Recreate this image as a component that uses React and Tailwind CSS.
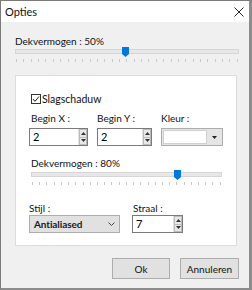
import React from "react";

function Ticks({ count, className }) {
  return (
    <div className={"flex justify-between " + className}>
      {Array.from({ length: count }).map((_, i) => (
        <div key={i} className="w-px h-[3px] bg-[#c8c8c8]" />
      ))}
    </div>
  );
}

function Thumb({ className }) {
  return (
    <svg className={"absolute " + className} width="7" height="10" viewBox="0 0 7 10">
      <polygon points="0,0 7,0 7,7 3.5,10 0,7" fill="#0078d7" />
    </svg>
  );
}

function Spin() {
  return (
    <div className="flex flex-col w-[9px] h-full border-l border-[#e0e0e0]">
      <div className="flex-1 bg-[#e8e8e8] border border-[#bcbcbc] flex items-center justify-center">
        <svg width="5" height="3" viewBox="0 0 5 3"><polygon points="0,3 5,3 2.5,0" fill="#333" /></svg>
      </div>
      <div className="flex-1 bg-[#e8e8e8] border border-t-0 border-[#bcbcbc] flex items-center justify-center">
        <svg width="5" height="3" viewBox="0 0 5 3"><polygon points="0,0 5,0 2.5,3" fill="#333" /></svg>
      </div>
    </div>
  );
}

function NumInput({ value, className }) {
  return (
    <div className={"h-[18px] bg-white border border-[#7a7a7a] flex items-stretch " + className}>
      <div className="flex-1 pl-[3px] leading-[16px] text-[11px] text-black">{value}</div>
      <Spin />
    </div>
  );
}

export default function App() {
  return (
    <div
      className="w-[252px] h-[290px] bg-[#f0f0f0] border-l border-t border-[#7a7a7a] border-r-[3px] border-r-[#8c8c8c] border-b-[2px] border-b-[#8c8c8c] flex flex-col text-[10px] text-[#111]"
      style={{ fontFamily: 'Lato, "Noto Sans", sans-serif' }}
    >
      <div className="h-[21px] bg-white flex items-center justify-between pl-[4px] pr-[5px]">
        <span className="leading-[16px] text-[11px]">Opties</span>
        <svg width="10" height="10" viewBox="0 0 10 10">
          <path d="M0.5 0.5 L9.5 9.5 M9.5 0.5 L0.5 9.5" stroke="#222" strokeWidth="1" />
        </svg>
      </div>
      <div className="flex flex-col px-[14px] pt-[11px]">
        <div className="leading-[16px]">Dekvermogen : 50%</div>
        <div className="relative w-[224px] h-[5px] bg-[#e7e7e7] border border-[#d6d6d6]">
          <Thumb className="left-[106px] top-[-3px]" />
        </div>
        <Ticks count={31} className="mt-[5px] w-[222px] ml-px" />
        <div className="mt-[13px] w-[222px] h-[171px] bg-white border border-[#dcdcdc] flex flex-col pl-[13px] pt-[16px]">
          <div className="flex items-center h-[14px] ml-[2px]">
            <div className="w-[10px] h-[10px] border border-[#333] bg-white flex items-center justify-center">
              <svg width="8" height="8" viewBox="0 0 8 8">
                <path d="M1 4 L3 6.3 L7 1.5" stroke="#222" strokeWidth="1" fill="none" />
              </svg>
            </div>
            <span className="ml-[1px] leading-[14px] text-[10.5px]">Slagschaduw</span>
          </div>
          <div className="flex mt-[4px]">
            <div className="flex flex-col w-[59px]">
              <span className="leading-[16px] ml-[2px]">Begin X :</span>
              <NumInput value="2" className="mt-[2px] w-[59px]" />
            </div>
            <div className="flex flex-col w-[55px] ml-[9px]">
              <span className="leading-[16px]">Begin Y :</span>
              <NumInput value="2" className="mt-[2px] w-[55px]" />
            </div>
            <div className="flex flex-col w-[62px] ml-[9px]">
              <span className="leading-[16px]">Kleur :</span>
              <div className="mt-[2px] h-[18px] w-[62px] border border-[#adadad] bg-[#e5e5e5] flex items-stretch p-px">
                <div className="flex-1 bg-white border border-[#cfcfcf]" />
                <div className="w-[14px] flex items-center justify-center">
                  <svg width="5" height="3" viewBox="0 0 5 3"><polygon points="0,0 5,0 2.5,3" fill="#222" /></svg>
                </div>
              </div>
            </div>
          </div>
          <div className="mt-[9px] leading-[16px] ml-[2px]">Dekvermogen : 80%</div>
          <div className="relative mt-px ml-[2px] w-[191px] h-[5px] bg-[#e7e7e7] border border-[#d6d6d6]">
            <Thumb className="left-[142px] top-[-3px]" />
          </div>
          <Ticks count={27} className="mt-[5px] w-[189px] ml-[3px]" />
          <div className="flex mt-[16px]">
            <div className="flex flex-col w-[91px]">
              <span className="leading-[14px]">Stijl :</span>
              <div className="h-[18px] w-[91px] bg-[#e1e1e1] border border-[#adadad] flex items-center justify-between pl-[4px] pr-[4px]">
                <span className="leading-[16px] text-[10px] font-bold tracking-[-0.1px] text-[#1a1a1a]">Antialiased</span>
                <svg width="7" height="4" viewBox="0 0 7 4">
                  <path d="M0.5 0.5 L3.5 3.5 L6.5 0.5" stroke="#444" strokeWidth="1" fill="none" />
                </svg>
              </div>
            </div>
            <div className="flex flex-col w-[51px] ml-[12px]">
              <span className="leading-[14px] ml-px">Straal :</span>
              <NumInput value="7" className="w-[51px]" />
            </div>
          </div>
        </div>
        <div className="flex justify-end mt-[12px] pr-[0px] gap-[10px] w-[224px]">
          <div className="w-[58px] h-[21px] bg-[#e1e1e1] border border-[#adadad] flex items-center justify-center leading-[16px]">Ok</div>
          <div className="w-[59px] h-[21px] bg-[#e1e1e1] border border-[#adadad] flex items-center justify-center leading-[16px]">Annuleren</div>
        </div>
      </div>
    </div>
  );
}
